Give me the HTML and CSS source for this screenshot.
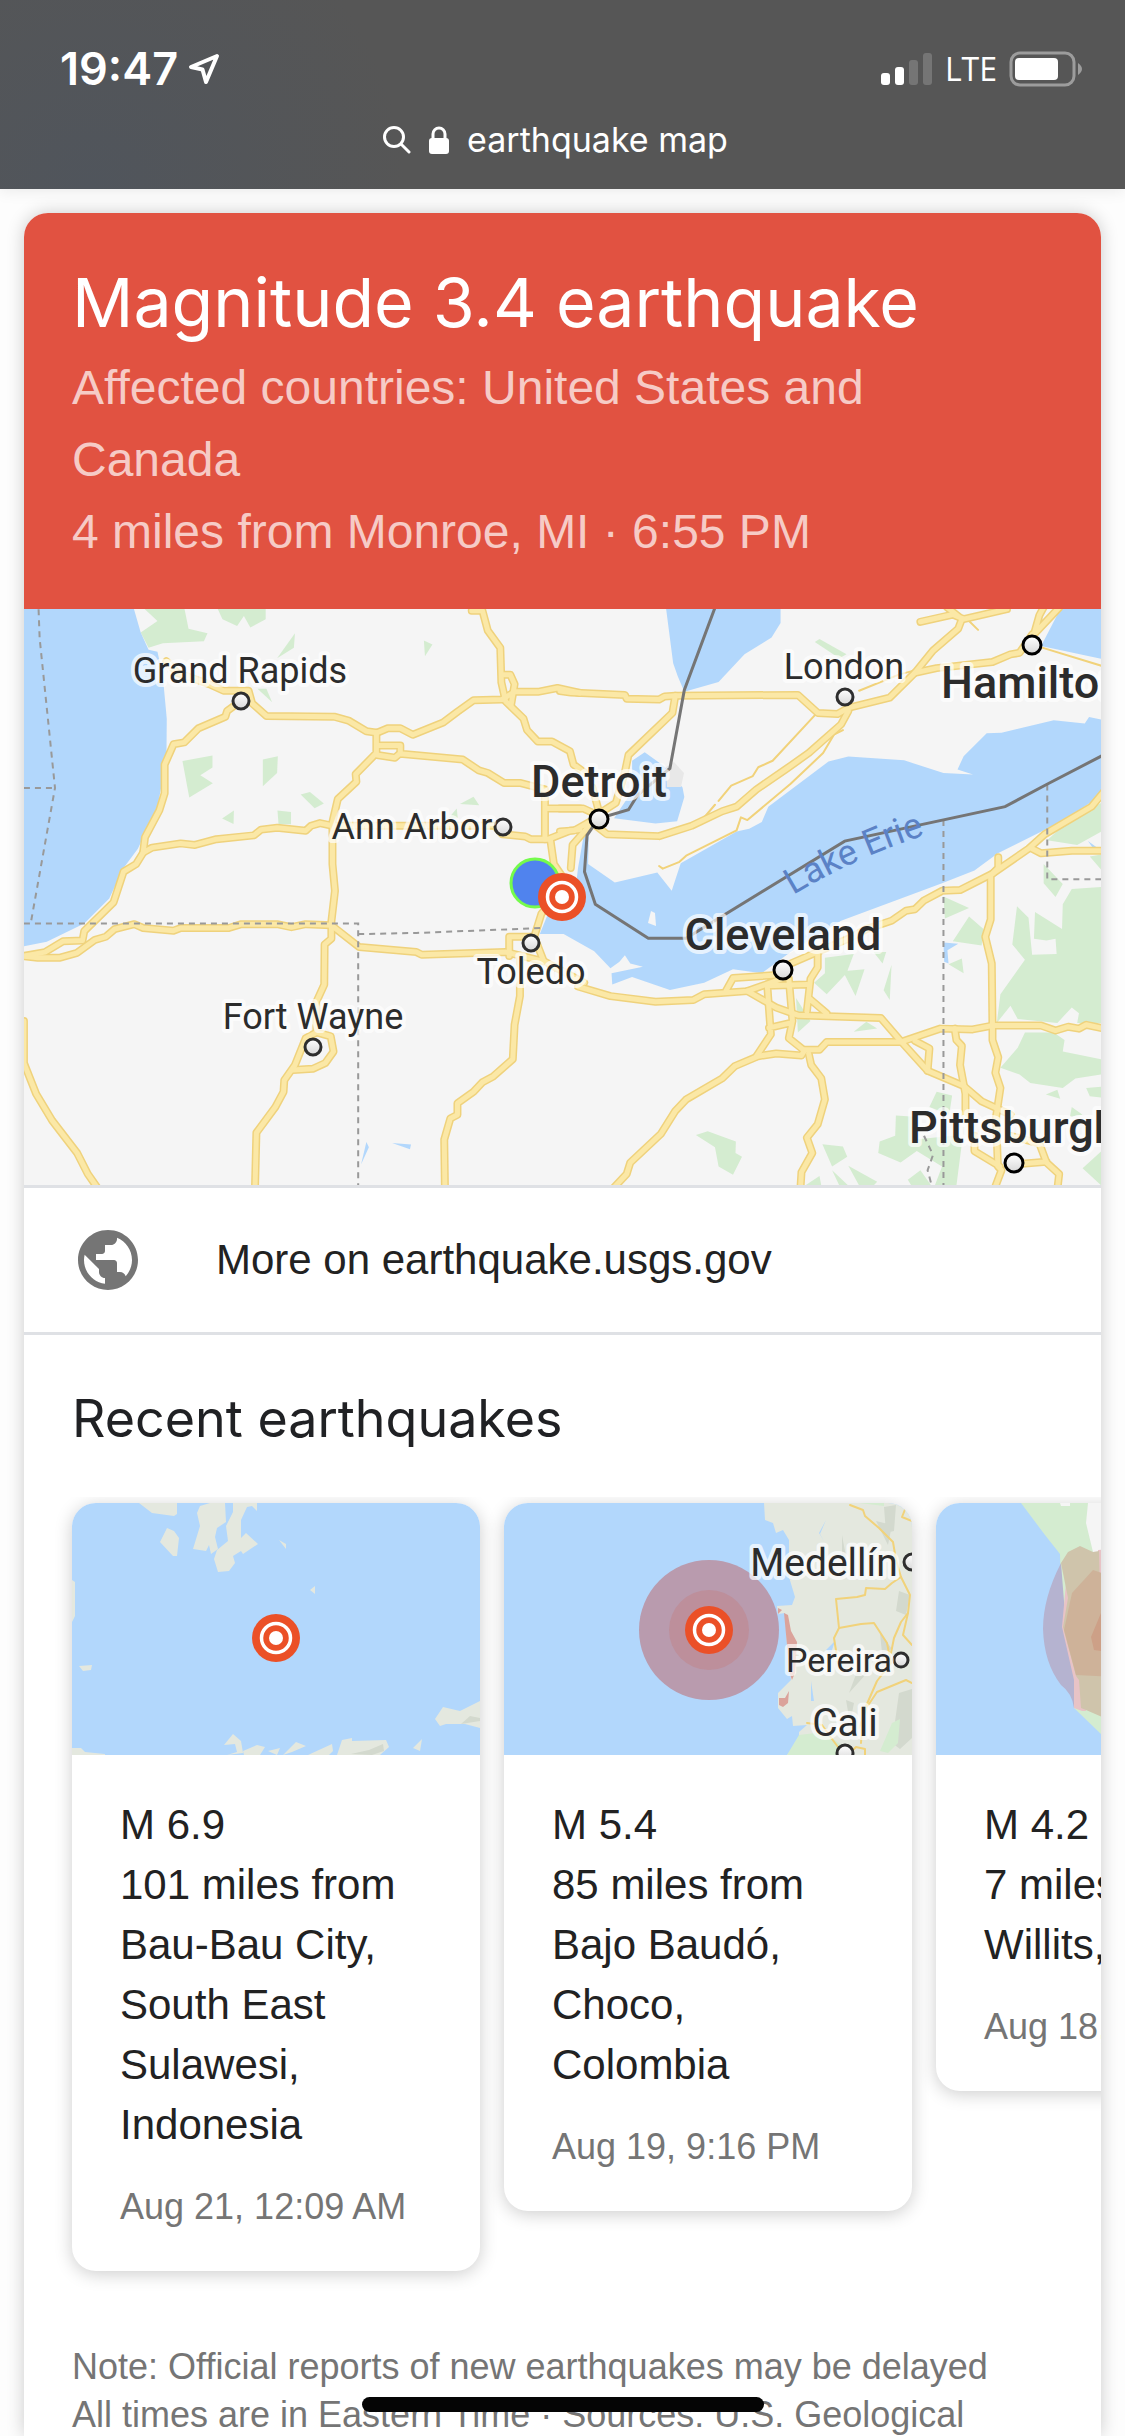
FILE: index.html
```html
<!DOCTYPE html>
<html lang="en">
<head>
    <meta charset="UTF-8">
    <meta name="viewport" content="width=device-width, initial-scale=1.0">
    <title>earthquake map</title>
    <link rel="stylesheet" href="styles.css">
</head>
<body>
    <header class="top-bar">
        <div class="status">
            <div class="status-left">
                <span class="clock">19:47</span>
                <svg class="location" viewBox="0 0 32 32" aria-hidden="true">
                    <path d="M29 3 L3 14 L14.500 16.500 L18 29 Z"/>
                </svg>
            </div>
            <div class="status-right">
                <svg class="signal" viewBox="0 0 52 34" aria-hidden="true">
                    <rect x="0" y="21" width="9" height="12" rx="3"/>
                    <rect x="14" y="15" width="9" height="18" rx="3"/>
                    <rect class="off" x="28" y="8" width="9" height="25" rx="3"/>
                    <rect class="off" x="42" y="1" width="9" height="32" rx="3"/>
                </svg>
                <span class="network">LTE</span>
                <svg class="battery" viewBox="0 0 74 36" aria-hidden="true">
                    <rect class="shell" x="2" y="2" width="63" height="32" rx="9"/>
                    <rect x="6" y="7" width="43" height="22" rx="4"/>
                    <path class="tip" d="M69 12 Q77 18 69 24 Z"/>
                </svg>
            </div>
        </div>
        <button class="address" type="button">
            <svg class="glass" viewBox="0 0 28 30" aria-hidden="true">
                <circle cx="11" cy="12" r="9.500"/>
                <path d="M18 19 L26 27"/>
            </svg>
            <svg class="lock" viewBox="0 0 20 30" aria-hidden="true">
                <path class="shackle" d="M4 14 V9 a6 6 0 0 1 12 0 V14"/>
                <rect x="0" y="13" width="20" height="16" rx="3"/>
            </svg>
            <span>earthquake map</span>
        </button>
    </header>

    <main class="panel">
        <section class="alert">
            <h1>Magnitude 3.4 earthquake</h1>
            <p>Affected countries: United States and Canada</p>
            <p>4 miles from Monroe, MI · 6:55 PM</p>
        </section>

        <svg class="map" viewBox="0 0 1077 576" preserveAspectRatio="xMidYMid slice" role="img" aria-label="Map of the area around Monroe, Michigan">
            <defs>
                <linearGradient id="dot-fill" x1="0" y1="0" x2="0" y2="1">
                    <stop offset="0" stop-color="#fff"/>
                    <stop offset="1" stop-color="#d8d8d8"/>
                </linearGradient>
                <symbol id="epicenter" viewBox="0 0 48 48">
                    <circle cx="24" cy="24" r="24" fill="#eb5027"/>
                    <circle cx="24" cy="24" r="14.500" fill="none" stroke="#fff" stroke-width="3.500"/>
                    <circle cx="24" cy="24" r="7" fill="#fff"/>
                </symbol>
                <g id="roads">
                    <g transform="matrix(.3571 0 0 .3827 -4 -9)">
                        <path d="M1265 28H1295L1310 80 1345 125 1348 215 1360 265 1410 310 1420 340 1450 370H1490L1540 395 1550 430 1580 450"/>
                        <path d="M410 160L440 190 530 220 570 237H640L650 270 690 303 880 305 920 315 970 343 1000 347 1030 335H1065L1100 352 1185 320 1225 292 1270 262 1350 260 1385 240H1450L1505 230 1568 243"/>
                        <path d="M618 264L580 290 575 305 500 335 460 372 430 377 405 430V505L390 550 350 620 345 660 325 690 290 710 262 790 180 865 175 890 120 892 70 920 0 932"/>
                        <path d="M345 660L370 647 450 636 490 640 550 625 655 615 675 600 720 595 800 603 815 590 840 583 875 590H1330L1350 612 1415 618 1430 625H1480L1540 603 1568 600"/>
                        <path d="M998 347V400L940 455 942 475 890 520 875 580V690L882 760 872 840V885L853 900 852 1005 830 1050V1130L800 1145 770 1215 740 1255 738 1285 715 1325 662 1392 658 1540"/>
                        <path d="M1000 380H1065V400L1050 412 1000 405M1065 402L1240 417 1285 445 1310 452 1355 478H1400L1470 495V625M1470 545H1568"/>
                        <path d="M0 930L50 935H110L160 922 210 888 240 880 265 860 320 847 345 857 430 864 450 857H585L620 847H720L760 855 800 847 872 850 950 907 1110 920 1125 927 1360 920 1470 945 1580 1000"/>
                        <path d="M830 1130L870 1140 878 1180 855 1210 820 1225 765 1228"/>
                        <path d="M1485 625L1495 690 1517 720V750L1460 820 1440 880H1370V930M1440 880L1465 940M1400 930V1035L1385 1110 1380 1200 1325 1245 1295 1260 1270 1285 1225 1315V1345L1205 1355 1188 1410 1190 1540"/>
                        <path d="M1355 195H1373L1385 220 1375 275M11 1100V1210L45 1290 90 1360 160 1445 190 1500 220 1540"/>
                    </g>
                    <g transform="matrix(.3604 0 0 .3827 536 -9)">
                        <path d="M0 238L30 242 180 248 185 258 275 260 290 252 320 250 660 248 715 295 770 298 800 282 915 255 985 190 1045 178 1200 162 1250 142 1275 138 1310 90"/>
                        <path d="M320 250L312 295 190 405 180 450 155 530 105 560"/>
                        <path d="M800 290L780 325 690 400 630 440 545 495 490 540 450 552 365 590 275 617 130 612 100 590"/>
                        <path d="M985 190L1035 132 1105 75 1115 50 1075 20M1000 57L1090 38 1120 50 1240 24"/>
                        <path d="M1315 90L1330 40 1345 14M1320 85L1385 20"/>
                        <path d="M0 545H65L100 560M0 605L40 602 100 570M30 700L35 640 100 570M90 490L110 560"/>
                        <path d="M50 1010L140 1035 265 1050 370 1045 400 1030 520 1022 630 985M460 1022L480 988 600 980"/>
                        <path d="M640 950L800 885 850 860 920 838 960 812 985 808 1010 785 1060 760 1110 758 1200 715 1300 650 1345 612 1475 540 1510 500"/>
                        <path d="M1310 650L1335 662 1420 655H1510"/>
                        <path d="M1216 672V700L1195 720V835L1180 880 1198 950 1200 1115V1150L1216 1195 1208 1235 1222 1275 1210 1350 1215 1480 1225 1490 1205 1540"/>
                        <path d="M520 1022L600 1065 660 1085 890 1092 945 1152 1020 1230 1120 1270 1170 1310 1250 1345"/>
                        <path d="M545 1192L585 1135 575 1005M635 990L645 1100 635 1145 675 1175M580 1118L640 1105M715 925V960L695 990 685 1075M575 1008L685 1005M690 1040L740 1080"/>
                        <path d="M145 1540L185 1500 195 1470 280 1395 320 1335 350 1305 450 1250 485 1218 550 1192 600 1185 670 1190 680 1175H720L740 1155H945L1055 1120 1145 1122 1200 1112H1335L1375 1125 1410 1115 1440 1120 1460 1110 1510 1120"/>
                        <path d="M690 1185L697 1215 725 1250 735 1305 715 1370 685 1405 700 1445 670 1495 667 1540"/>
                        <path d="M1095 1120L1100 1150 1115 1165 1110 1215 1125 1290V1350M985 1152L1025 1172 1020 1230"/>
                        <path d="M1150 1400V1440L1220 1480M1250 1400L1330 1420 1350 1470 1385 1500 1380 1540M1260 1475L1350 1468"/>
                    </g>
                </g>
                <path id="lake-curve" d="M769 286 Q832 248 910 223"/>
            </defs>
            <rect class="ground" width="1077" height="576"/>

            <!-- Parks -->
            <g class="park" transform="matrix(.3571 0 0 .3827 -4 -9)">
                <path d="M345 20H460L472 75 525 87 515 108 400 113 360 125 338 85 385 55Z"/>
                <path d="M552 20H688V50L645 72 627 42 608 68 567 50Z"/>
                <path d="M770 87L767 125 720 152Z"/>
                <path d="M1131 106L1155 116 1134 147Z"/>
                <path d="M665 232H690L706 267Z"/>
                <path d="M455 421L539 406V438L505 458 540 479 474 516Z"/>
                <path d="M680 417L722 408 720 452 680 487Z"/>
                <path d="M786 508L812 502 851 532 825 544Z"/>
                <path d="M566 571L599 550 598 585ZM721 550L759 554V586H724ZM1232 533L1270 514 1286 536ZM1200 570L1223 545 1226 570Z"/>
            </g>
            <g class="park" transform="matrix(.3604 0 0 .3827 536 -9)">
                <path d="M707 110L720 102 795 142 775 152Z"/>
                <path d="M1502 530V605L1435 640 1352 628 1400 585ZM1342 690L1395 742 1375 776 1342 740ZM1470 670L1502 665V705Z"/>
                <path d="M1064 775L1135 805 1068 832ZM1135 827L1175 860 1170 903 1090 892ZM1078 952L1115 937 1120 975Z"/>
                <path d="M1502 750L1420 755 1395 795 1393 860 1318 815 1315 885 1350 890 1375 885 1378 925 1310 927 1300 830 1268 800 1255 900 1290 940 1222 1030 1212 1105 1250 1060 1270 1095 1380 1105 1420 1065 1440 1080 1435 1105H1502Z"/>
                <path d="M1290 1130H1370L1400 1150 1395 1180 1450 1190 1502 1200V1240L1430 1250 1395 1275 1305 1262 1275 1240 1222 1222 1270 1170Z"/>
                <path d="M735 935L815 925 795 975 740 1030 705 1000 735 975ZM785 970L845 965 820 1035ZM920 953L915 1045 898 1020ZM870 920L905 920 895 950ZM815 1128L850 1102 880 1120ZM655 1040L695 1100 660 1130Z"/>
                <path d="M932 1347L985 1350V1410L1090 1400 1115 1420 1100 1530H1040L1060 1480 990 1440 945 1470 883 1445 887 1415 930 1400ZM1045 1285L1088 1295 1080 1345 1025 1325Z"/>
                <path d="M377 1398L410 1388 488 1415 487 1445 505 1455 480 1502 440 1480 430 1430ZM728 1422L785 1428 797 1455 755 1480ZM680 1530L720 1505 725 1530ZM755 1490L800 1530H775ZM800 1478L880 1520 870 1530H830ZM965 1515L1000 1490 1030 1530H975Z"/>
                <path d="M1348 1292L1380 1280 1388 1303ZM1460 1275L1502 1272V1300L1470 1297ZM1420 1325L1450 1345 1415 1350ZM1450 1485L1502 1440V1530Z"/>
            </g>

            <!-- Lakes -->
            <g class="water">
                <path transform="matrix(.3571 0 0 .3827 -4 -9)" d="M0 20H318L338 85 360 130 385 135 400 200 411 310 410 420 385 540 330 650 290 700 250 780 180 845 75 893 0 907ZM955 1475L970 1416 977 1430ZM1042 1419L1095 1423 1092 1435Z"/>
                <g transform="matrix(.3604 0 0 .3827 536 -9)">
                    <path d="M294 20H612V60L587 98 512 142 440 214 345 240 327 200 314 165Z"/>
                    <path d="M200 420L235 398 290 435 340 490 345 515 325 578 265 584 150 570 200 500Z"/>
                    <path d="M1390 20H1510V155L1335 120Z"/>
                    <path d="M80 610L78 690 152 738 270 712 310 760 335 688 490 605 525 598 560 580 578 540 745 422 800 409 955 419 1064 452 1146 456 1103 443 1120 408 1184 348 1225 347 1370 314 1456 323 1468 306 1510 314V505L1400 575 1215 662 1150 707 1060 740 780 838 640 920 560 975 480 965 400 1000 305 1019 200 985 145 1005 143 975 230 958 195 950 180 928 165 945 140 962 95 918 10 873H-56L-25 800 40 780 50 700 66 615Z"/>
                    <path d="M1064 895L1105 898 1075 915 1078 950 1066 945ZM1465 630L1502 655 1480 650Z"/>
                </g>
            </g>
            <path class="ground" d="M624 314L627 302 631 304 632 317Z"/>
            <path class="town" d="M642 158L650 153 660 164 657 178 643 178Z"/>

            <!-- Roads -->
            <g class="minor-road" transform="matrix(.3604 0 0 .3827 536 -9)">
                <path d="M1340 125L1510 174M830 237L940 195 1000 180M1135 55L1160 78"/>
                <path d="M708 300L590 420 550 437 535 460 475 485 440 525M430 535L380 590"/>
                <path d="M785 340L760 352 730 400 640 480 520 575 502 568 490 602 350 668 330 685 285 702 275 695"/>
            </g>
            <use class="road-edge" href="#roads"/>
            <use class="road" href="#roads"/>

            <!-- Borders -->
            <g class="state-line">
                <path transform="matrix(.3571 0 0 .3827 -4 -9)" d="M52 24L55 100 98 491 30 845M11 491H98M11 845H947V1530M947 873L1110 870 1465 857"/>
                <path transform="matrix(.3604 0 0 .3827 536 -9)" d="M1064 575V1530M1352 482V730H1502M1010 1400L1035 1450 1020 1490 1030 1525"/>
            </g>
            <path class="country-line" transform="matrix(.3604 0 0 .3827 536 -9)" d="M430 20L345 235 305 440 215 510 190 548 107 571 75 615 68 710 98 795 245 884H350L790 630 1235 540 1350 482 1510 404"/>

            <!-- Places -->
            <g class="dot">
                <circle cx="217" cy="92" r="8"/>
                <circle cx="479" cy="218" r="8"/>
                <circle cx="507" cy="334" r="8"/>
                <circle cx="289" cy="438" r="8"/>
                <circle cx="821" cy="88" r="8"/>
            </g>
            <g class="dot dot-city">
                <circle cx="575" cy="210" r="9"/>
                <circle cx="1008" cy="36" r="9"/>
                <circle cx="759" cy="361" r="9"/>
                <circle cx="990" cy="554" r="9"/>
            </g>
            <g class="label">
                <text x="216" y="74">Grand Rapids</text>
                <text x="388" y="230">Ann Arbor</text>
                <text x="507" y="375">Toledo</text>
                <text x="289" y="420">Fort Wayne</text>
                <text x="820" y="70">London</text>
            </g>
            <g class="label label-city">
                <text x="575" y="188">Detroit</text>
                <text x="759" y="341">Cleveland</text>
                <text class="from-left" x="917" y="89">Hamilton</text>
                <text class="from-left" x="885" y="534">Pittsburgh</text>
            </g>
            <text class="lake-name"><textPath href="#lake-curve">Lake Erie</textPath></text>

            <circle class="my-location" cx="511" cy="274" r="24"/>
            <use href="#epicenter" x="514" y="264" width="48" height="48"/>
        </svg>

        <a class="more-link" href="#">
            <svg viewBox="0 0 24 24" aria-hidden="true">
                <path d="M12 2C6.480 2 2 6.480 2 12s4.480 10 10 10 10-4.480 10-10S17.520 2 12 2zm-1 17.930c-3.950-.490-7-3.850-7-7.930 0-.620.080-1.210.210-1.790L9 15v1c0 1.100.900 2 2 2v1.930zm6.900-2.540c-.260-.810-1-1.390-1.900-1.390h-1v-3c0-.550-.450-1-1-1H8v-2h2c.550 0 1-.450 1-1V7h2c1.100 0 2-.900 2-2v-.410c2.930 1.190 5 4.060 5 7.410 0 2.080-.800 3.970-2.100 5.390z"/>
            </svg>
            <span>More on earthquake.usgs.gov</span>
        </a>

        <section class="recent">
            <h2>Recent earthquakes</h2>
            <div class="carousel">
                <a class="quake" href="#">
                    <svg class="quake-map" viewBox="0 0 408 252" aria-hidden="true">
                        <rect class="water" width="408" height="252"/>
                        <g class="land">
                            <path d="M67 0H105V11L102 13 80 10ZM95 25L102 28 107 35 105 53H101L88 39ZM128 3L138 0H153L154 19 145 25 143 34 146 46 139 51 137 42 134 48 121 46 128 23 125 10Z"/>
                            <path d="M161 0H185V8L180 3 175 4 169 17V35L174 30 186 41 171 51 169 48 161 53 163 60 157 68 146 69 142 56 145 47 156 38 154 23 161 9Z"/>
                            <path d="M0 77L3 79V113L0 119ZM7 163L20 162 19 167 11 168ZM207 37L214 41V46ZM238 87L243 83V91Z"/>
                            <path d="M0 245H9L13 249 33 251V252H0ZM371 204L388 208 408 198V225L393 221 374 221 368 223 363 216Z"/>
                            <path d="M152 242L161 231 169 238 171 250 155 252 165 249 163 241ZM171 248L185 242 193 244 188 252H172ZM196 248L208 245 205 252ZM211 252L224 239 234 243 220 249ZM236 252L260 241 261 248 257 252ZM265 252L270 237 280 235V238L314 237 317 244 308 252ZM341 245L350 236 348 248Z"/>
                        </g>
                        <path class="hill" d="M389 221L398 213 408 215V218ZM279 251L297 247 311 241 312 248 300 252Z"/>
                        <use href="#epicenter" x="180" y="111" width="48" height="48"/>
                    </svg>
                    <div class="quake-text">
                        <h3>M 6.9</h3>
                        <p>101 miles from Bau-Bau City, South East Sulawesi, Indonesia</p>
                        <time>Aug 21, 12:09 AM</time>
                    </div>
                </a>

                <a class="quake" href="#">
                    <svg class="quake-map" viewBox="0 0 408 252" aria-hidden="true">
                        <rect class="water" width="408" height="252"/>
                        <path class="land" d="M260 0L261 17 269 20 272 30 279 27 285 37V74L291 94 288 102 273 103 274 111 281 110 283 142 287 177 274 190V205L283 216 288 213 289 223 303 222 295 229V238L283 252H408V0Z"/>
                        <path class="hill" d="M380 4L392 2 390 28 382 30ZM372 18L388 22 384 42ZM338 32L345 70 338 66ZM395 88L406 92 402 112 392 108ZM360 150L372 160 345 190ZM342 197L350 200 346 220ZM395 190L408 186V235L396 246 388 240ZM376 130L388 146 378 150Z"/>
                        <path class="park" d="M283 252L295 232 320 229 340 244 342 252ZM388 220L396 216 394 240 384 250 376 248ZM355 0H380V3Z"/>
                        <path class="water" d="M322 17L315 30 320 38 316 31ZM331 138L327 150 322 147ZM307 178L310 198H307ZM389 78L396 88Z"/>
                        <g class="trail">
                            <path d="M346 2L359 7 361 13 375 25 389 39 392 57 397 74 406 92 404 110 397 119 390 135 387 150"/>
                            <path d="M397 74L388 80 381 86 362 85 361 92 353 94 332 96 335 125 330 135 334 160"/>
                            <path d="M335 125L357 121 370 120 383 140 387 160 373 178 359 210 357 240"/>
                            <path d="M404 110L399 132 408 142M408 180L402 177 373 189 363 204 355 225M303 220L318 222 328 236 340 252M408 18L398 14 402 4M346 250L352 244 361 246V252"/>
                        </g>
                        <path class="coast-zone" d="M280 110L284 112 287 128 293 139 291 170 288 177 285 168 283 142ZM274 105L278 107 274 111ZM285 188L284 200 279 204 275 202 275 195 281 195Z"/>
                        <circle fill="#b99bae" cx="205" cy="127" r="70"/>
                        <circle fill="#bd8f9b" cx="205" cy="127" r="40"/>
                        <use href="#epicenter" x="181" y="103" width="48" height="48"/>
                        <g class="dot">
                            <circle cx="408" cy="59" r="8"/>
                            <circle cx="397" cy="157" r="7"/>
                            <circle cx="341" cy="250" r="8"/>
                        </g>
                        <g class="label">
                            <text class="label-large" x="320" y="73">Medellín</text>
                            <text class="label-small" x="335" y="169">Pereira</text>
                            <text class="label-large" x="341" y="233">Cali</text>
                        </g>
                    </svg>
                    <div class="quake-text">
                        <h3>M 5.4</h3>
                        <p>85 miles from Bajo Baudó, Choco, Colombia</p>
                        <time>Aug 19, 9:16 PM</time>
                    </div>
                </a>

                <a class="quake" href="#">
                    <svg class="quake-map" viewBox="0 0 408 252" aria-hidden="true">
                        <rect class="water" width="408" height="252"/>
                        <path class="park" d="M85 0L109 32 124 51 126 124 138 177V205L165 231 190 252H408V0Z"/>
                        <path class="ground" d="M152 0L150 20 157 49 408 60V0ZM124 0H134V3H125Z"/>
                        <path fill="#b5b3d0" d="M125 60Q107 95 107 126 108 160 125 182 136 190 138 205L142 177 130 124Z"/>
                        <path fill="#e8c3c6" d="M130 80L126 124 138 177V205L146 208 150 208 145 170 134 120 136 92ZM162 47L180 45V92H162Z"/>
                        <path fill="#cfc4ab" d="M125 60L132 49 144 43 157 49 163 48 164 90 180 90V220L150 207 145 205 143 177 140 173 127 124 132 95Z"/>
                        <path fill="#ceb299" d="M136 90L157 67 180 75V174L140 172 128 127Z"/>
                        <path fill="#cda087" d="M180 105L165 110 155 134 158 147 180 150Z"/>
                    </svg>
                    <div class="quake-text">
                        <h3>M 4.2</h3>
                        <p>7 miles from Willits, CA</p>
                        <time>Aug 18, 5:52 PM</time>
                    </div>
                </a>
            </div>
        </section>

        <footer class="note">
            <p>Note: Official reports of new earthquakes may be delayed</p>
            <p>All times are in Eastern Time · Sources: U.S. Geological Survey</p>
        </footer>
    </main>

    <div class="home-indicator"></div>
</body>
</html>
```

FILE: styles.css
```css
* {
    box-sizing: border-box;
}

body {
    display: flex;
    flex-direction: column;
    height: 100vh;
    margin: 0;
    overflow: hidden;
    background-color: #fdfdfd;
    color: #202124;
    font-family: "Liberation Sans", Arial, sans-serif;
}

h1, h2, h3, p {
    margin: 0;
    font-weight: normal;
}

a {
    color: inherit;
    text-decoration: none;
}

/* Browser bar */
.top-bar {
    flex: none;
    padding: 45px 0 23px;
    background: radial-gradient(circle at 8% 100%, #50555c, #565656 30%);
    color: #fff;
    font-family: Inter, sans-serif;
    box-shadow: 0 0 16px rgba(0, 0, 0, 0.1);
}

.status,
.status-left,
.status-right {
    display: flex;
    align-items: center;
}

.status {
    justify-content: space-between;
    height: 48px;
    padding: 0 42px 0 60px;
}

.status-left {
    gap: 10px;
}

.status-right {
    gap: 12px;
}

.clock {
    font-size: 45px;
    font-weight: 600;
    line-height: 48px;
}

.network {
    font-family: "Open Sans", sans-serif;
    font-size: 32px;
    font-weight: 500;
    line-height: 48px;
}

.location {
    width: 32px;
    height: 32px;
    fill: none;
    stroke: #fff;
    stroke-width: 4;
    stroke-linejoin: round;
}

.signal {
    width: 52px;
    height: 34px;
    fill: #fff;
}

.signal .off {
    fill: #757575;
}

.battery {
    width: 74px;
    height: 36px;
    fill: #fff;
}

.battery .shell {
    fill: none;
    stroke: #9c9c9c;
    stroke-width: 3;
}

.battery .tip {
    fill: #9c9c9c;
}

.address {
    display: flex;
    align-items: center;
    gap: 18px;
    margin: 21px auto 0;
    padding: 0 14px 0 0;
    border: none;
    background: none;
    color: #fff;
    font-family: inherit;
    font-size: 34px;
    line-height: 52px;
    cursor: pointer;
}

.glass {
    width: 28px;
    height: 30px;
    fill: none;
    stroke: #fff;
    stroke-width: 3;
    stroke-linecap: round;
}

.lock {
    width: 20px;
    height: 30px;
    fill: #fff;
}

.lock .shackle {
    fill: none;
    stroke: #fff;
    stroke-width: 3;
}

/* Result panel */
.panel {
    flex: 1;
    min-height: 0;
    margin: 24px 24px 0;
    overflow: hidden;
    border-radius: 24px 24px 0 0;
    background-color: #fff;
    box-shadow: 0 0 18px rgba(0, 0, 0, 0.2);
}

.alert {
    padding: 48px 72px 41px 48px;
    background-color: #e15241;
    color: #f6cbc6;
    font-size: 48px;
    line-height: 72px;
}

.alert h1 {
    margin-bottom: 9px;
    color: #fff;
    font-family: Inter, sans-serif;
    font-size: 68px;
    line-height: 82px;
}

.map {
    display: block;
    width: 100%;
    height: 576px;
}

.ground {
    fill: #f5f5f5;
}

.town {
    fill: #e8e8e8;
}

.park {
    fill: #d4ecd0;
}

.water {
    fill: #b2d7fc;
}

.land {
    fill: #e4e8df;
}

.hill {
    fill: #d3d9ce;
}

.road,
.road-edge,
.minor-road,
.trail {
    fill: none;
    stroke-linejoin: round;
    stroke-linecap: round;
}

#roads path,
.minor-road path,
.state-line path,
.country-line {
    vector-effect: non-scaling-stroke;
}

.road-edge {
    stroke: #efd27c;
    stroke-width: 8;
}

.road {
    stroke: #fbe8a6;
    stroke-width: 5;
}

.minor-road,
.trail {
    stroke: #f1d27a;
    stroke-width: 2;
}

.state-line {
    fill: none;
    stroke: #999;
    stroke-width: 2;
    stroke-dasharray: 6 5;
}

.country-line {
    fill: none;
    stroke: #757575;
    stroke-width: 3;
}

.coast-zone {
    fill: #dba39b;
}

.dot {
    fill: url(#dot-fill);
    stroke: #2e2e2e;
    stroke-width: 3;
}

.dot-city {
    stroke: #000;
}

.label {
    fill: #2c2c2c;
    stroke: rgba(255, 255, 255, 0.7);
    stroke-width: 8;
    stroke-linejoin: round;
    paint-order: stroke;
    font-family: Roboto, sans-serif;
    font-size: 36px;
    text-anchor: middle;
}

.label-city {
    font-size: 45px;
    font-weight: 500;
}

.label-large {
    font-size: 39px;
}

.label-small {
    font-size: 34px;
}

.from-left {
    text-anchor: start;
}

.lake-name {
    fill: #5b82c6;
    font-family: Roboto, sans-serif;
    font-size: 36px;
}

.my-location {
    fill: #5083ee;
    stroke: #75fb4c;
    stroke-width: 3;
}

.more-link {
    display: flex;
    align-items: center;
    gap: 72px;
    height: 150px;
    padding: 0 48px;
    border-top: 3px solid #dfe1e5;
    border-bottom: 3px solid #dfe1e5;
    color: #222;
    font-size: 42px;
}

.more-link svg {
    width: 72px;
    height: 72px;
    fill: #757575;
}

/* Recent earthquakes */
.recent h2 {
    padding: 48px 48px 42px;
    font-family: Inter, sans-serif;
    font-size: 52px;
    line-height: 72px;
}

.carousel {
    display: flex;
    align-items: flex-start;
    gap: 24px;
    padding: 6px 48px 40px;
    overflow: hidden;
}

.quake {
    flex: 0 0 408px;
    overflow: hidden;
    border-radius: 24px;
    background-color: #fff;
    box-shadow: 0 3px 18px rgba(0, 0, 0, 0.2);
    color: #222;
}

.quake-map {
    display: block;
    width: 100%;
    height: 252px;
}

.quake-text {
    padding: 40px 48px 36px;
    font-size: 42px;
    line-height: 60px;
}

.quake-text h3 {
    font-size: 42px;
}

.quake-text time {
    display: block;
    margin-top: 24px;
    color: #757575;
    font-size: 36px;
    line-height: 56px;
    white-space: nowrap;
}

.note {
    padding: 32px 48px;
    color: #757575;
    font-size: 36px;
    line-height: 48px;
}

.home-indicator {
    position: fixed;
    bottom: 24px;
    left: 50%;
    width: 402px;
    height: 15px;
    border-radius: 8px;
    background-color: #050505;
    transform: translateX(-50%);
}
```
